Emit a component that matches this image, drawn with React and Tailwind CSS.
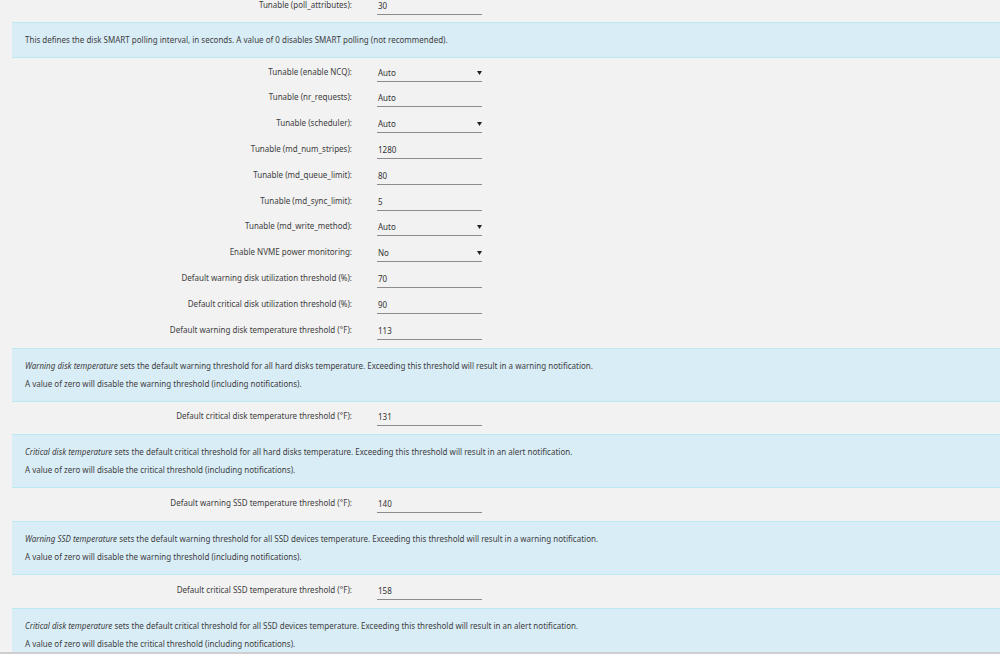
import React from "react";

function Row({ label, value, select }) {
  return (
    <div className="flex h-[25.8px] items-center">
      <div className="w-[340px] text-right text-[#404040]">{label}</div>
      <div className="ml-[25px] w-[105px] h-[17px] mt-[3px] border-b border-[#8c8c8c] flex items-center justify-between pl-[1px]">
        <span className="text-[#333]">{value}</span>
        {select && (
          <svg width="5" height="4" viewBox="0 0 5 4">
            <path d="M0 0 L5 0 L2.5 4 Z" fill="#222" />
          </svg>
        )}
      </div>
    </div>
  );
}

function Info({ children }) {
  return (
    <div className="bg-[#d9edf7] border-y border-[#bce8f1] pl-[13px] py-[8px] text-[#404040] leading-[18px]">
      {children}
    </div>
  );
}

export default function App() {
  return (
    <div
      className="w-[1000px] h-[654px] overflow-hidden bg-[#f2f2f2] text-[8px] relative"
      style={{ fontFamily: '"Noto Sans", "Open Sans", sans-serif' }}
    >
      <div className="ml-[12px] -mt-[8px]">
        <div className="pb-[4px]">
          <Row label="Tunable (poll_attributes):" value="30" />
        </div>
        <Info>
          <p>This defines the disk SMART polling interval, in seconds. A value of 0 disables SMART polling (not recommended).</p>
        </Info>
        <div className="pt-[1px] pb-[5px]">
          <Row label="Tunable (enable NCQ):" value="Auto" select />
          <Row label="Tunable (nr_requests):" value="Auto" />
          <Row label="Tunable (scheduler):" value="Auto" select />
          <Row label="Tunable (md_num_stripes):" value="1280" />
          <Row label="Tunable (md_queue_limit):" value="80" />
          <Row label="Tunable (md_sync_limit):" value="5" />
          <Row label="Tunable (md_write_method):" value="Auto" select />
          <Row label="Enable NVME power monitoring:" value="No" select />
          <Row label="Default warning disk utilization threshold (%):" value="70" />
          <Row label="Default critical disk utilization threshold (%):" value="90" />
          <Row label="Default warning disk temperature threshold (°F):" value="113" />
        </div>
        <Info>
          <p>
            <i>Warning disk temperature</i> sets the default warning threshold for all hard disks temperature. Exceeding this threshold will result in a warning notification.
          </p>
          <p>A value of zero will disable the warning threshold (including notifications).</p>
        </Info>
        <div className="pt-[2px] pb-[5px]">
          <Row label="Default critical disk temperature threshold (°F):" value="131" />
        </div>
        <Info>
          <p>
            <i>Critical disk temperature</i> sets the default critical threshold for all hard disks temperature. Exceeding this threshold will result in an alert notification.
          </p>
          <p>A value of zero will disable the critical threshold (including notifications).</p>
        </Info>
        <div className="pt-[2px] pb-[5px]">
          <Row label="Default warning SSD temperature threshold (°F):" value="140" />
        </div>
        <Info>
          <p>
            <i>Warning SSD temperature</i> sets the default warning threshold for all SSD devices temperature. Exceeding this threshold will result in a warning notification.
          </p>
          <p>A value of zero will disable the warning threshold (including notifications).</p>
        </Info>
        <div className="pt-[2px] pb-[5px]">
          <Row label="Default critical SSD temperature threshold (°F):" value="158" />
        </div>
        <Info>
          <p>
            <i>Critical disk temperature</i> sets the default critical threshold for all SSD devices temperature. Exceeding this threshold will result in an alert notification.
          </p>
          <p>A value of zero will disable the critical threshold (including notifications).</p>
        </Info>
      </div>
      <div className="absolute left-0 right-0 bottom-0 h-[2px] bg-[#cfcfcf]" />
    </div>
  );
}
